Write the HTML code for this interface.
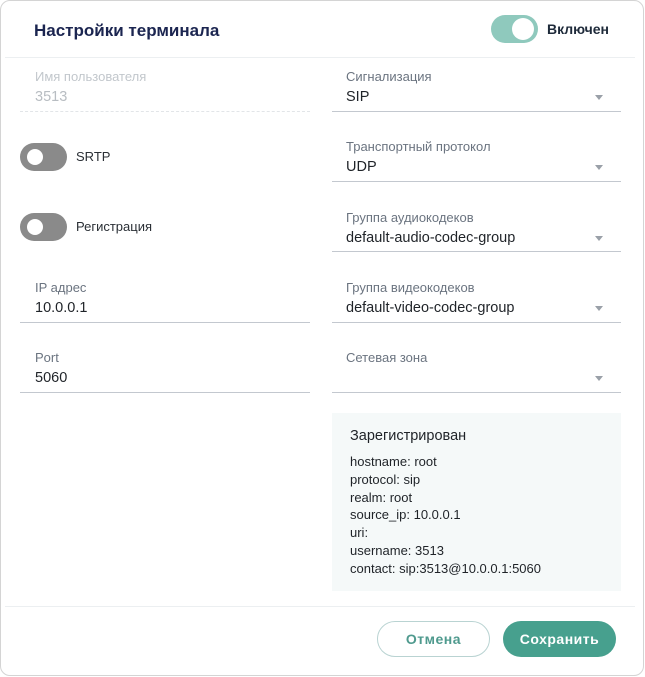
<!DOCTYPE html>
<html><head><meta charset="utf-8"><style>
*{margin:0;padding:0;box-sizing:border-box}
body{width:645px;height:677px;background:#fff;font-family:"Liberation Sans",sans-serif;position:relative;overflow:hidden}
.card{position:absolute;left:0;top:0;width:644px;height:676px;border:1px solid #d4d4d4;border-radius:10px}
.abs{position:absolute;white-space:nowrap}
.title{left:34px;top:21px;font-size:17px;font-weight:bold;color:#1b2550}
.hr{position:absolute;height:1px;background:#eceff1}
.tg{position:absolute;width:47px;height:28px;border-radius:14px;background:#8a8a8a}
.tg i{position:absolute;left:7px;top:6px;width:16px;height:16px;border-radius:50%;background:#fff}
.lbl{font-size:13px;color:#6b7480}
.val{font-size:14.5px;color:#1f2328}
.ul{position:absolute;height:1px;background:#c3c8cf}
.arr{position:absolute;width:0;height:0;border-left:4.5px solid transparent;border-right:4.5px solid transparent;border-top:5px solid #9aa0a8}
.box{position:absolute;left:332px;top:413px;width:289px;height:178px;background:#f5f9f9}
.btn{position:absolute;top:621px;height:36px;border-radius:18px;font-size:14px;font-weight:bold;text-align:center;line-height:34px;letter-spacing:.5px}
</style></head><body>
<div class="card"></div>
<div class="abs title">Настройки терминала</div>
<div class="tg" style="left:491px;top:15px;background:#8fc9bd"><i style="left:21px;top:3px;width:22px;height:22px"></i></div>
<div class="abs" style="left:547px;top:21px;font-size:14px;font-weight:bold;color:#1e2a3a">Включен</div>
<div class="hr" style="left:5px;top:57px;width:630px"></div>

<div class="abs lbl" style="left:35px;top:69px;color:#c2c7cc">Имя пользователя</div>
<div class="abs val" style="left:35px;top:89px;color:#b8bdc2">3513</div>
<div class="ul" style="left:20px;top:111px;width:290px;background:none;border-top:1px dashed #e2e5e8"></div>

<div class="tg" style="left:20px;top:143px"><i></i></div>
<div class="abs" style="left:76px;top:149px;font-size:13px;color:#2a2f35">SRTP</div>
<div class="tg" style="left:20px;top:213px"><i></i></div>
<div class="abs" style="left:76px;top:219px;font-size:13px;color:#2a2f35">Регистрация</div>

<div class="abs lbl" style="left:35px;top:280px">IP адрес</div>
<div class="abs val" style="left:35px;top:300px">10.0.0.1</div>
<div class="ul" style="left:20px;top:322px;width:290px"></div>
<div class="abs lbl" style="left:35px;top:350px">Port</div>
<div class="abs val" style="left:35px;top:370px">5060</div>
<div class="ul" style="left:20px;top:392px;width:290px"></div>

<div class="abs lbl" style="left:346px;top:69px">Сигнализация</div>
<div class="abs val" style="left:346px;top:89px">SIP</div>
<div class="arr" style="left:595px;top:95px"></div>
<div class="ul" style="left:332px;top:111px;width:289px"></div>

<div class="abs lbl" style="left:346px;top:139px">Транспортный протокол</div>
<div class="abs val" style="left:346px;top:159px">UDP</div>
<div class="arr" style="left:595px;top:165px"></div>
<div class="ul" style="left:332px;top:181px;width:289px"></div>

<div class="abs lbl" style="left:346px;top:210px">Группа аудиокодеков</div>
<div class="abs val" style="left:346px;top:230px">default-audio-codec-group</div>
<div class="arr" style="left:595px;top:236px"></div>
<div class="ul" style="left:332px;top:251px;width:289px"></div>

<div class="abs lbl" style="left:346px;top:280px">Группа видеокодеков</div>
<div class="abs val" style="left:346px;top:300px">default-video-codec-group</div>
<div class="arr" style="left:595px;top:306px"></div>
<div class="ul" style="left:332px;top:322px;width:289px"></div>

<div class="abs lbl" style="left:346px;top:350px">Сетевая зона</div>
<div class="arr" style="left:595px;top:376px"></div>
<div class="ul" style="left:332px;top:392px;width:289px"></div>

<div class="box"></div>
<div class="abs" style="left:350px;top:428px;font-size:14.5px;color:#1f2328">Зарегистрирован</div>
<div class="abs" style="left:350px;top:453px;font-size:13px;line-height:17.8px;color:#1f2328">hostname: root<br>protocol: sip<br>realm: root<br>source_ip: 10.0.0.1<br>uri:<br>username: 3513<br>contact: sip:3513@10.0.0.1:5060</div>

<div class="hr" style="left:5px;top:606px;width:630px"></div>
<div class="btn" style="left:377px;width:113px;border:1px solid #b9d3d2;color:#4f9a8e">Отмена</div>
<div class="btn" style="left:503px;width:113px;background:#47a08e;color:#fff;line-height:36px">Сохранить</div>
</body></html>
